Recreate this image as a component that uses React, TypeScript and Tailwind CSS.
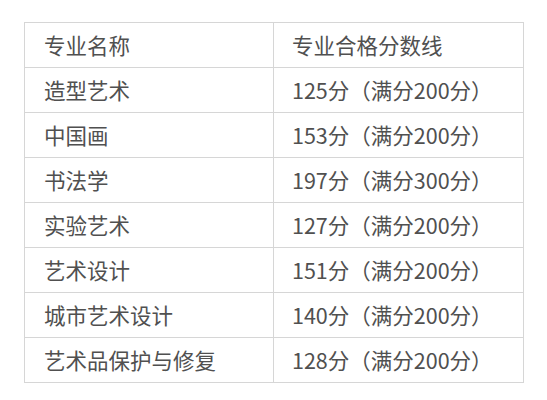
const rows = [
  ['专业名称', '专业合格分数线'],
  ['造型艺术', '125分（满分200分）'],
  ['中国画', '153分（满分200分）'],
  ['书法学', '197分（满分300分）'],
  ['实验艺术', '127分（满分200分）'],
  ['艺术设计', '151分（满分200分）'],
  ['城市艺术设计', '140分（满分200分）'],
  ['艺术品保护与修复', '128分（满分200分）'],
];

export default function App() {
  return (
    <div
      className="w-[547px] h-[400px] bg-white pt-[22px] pl-[24px]"
      style={{ fontFamily: '"Noto Sans CJK SC", "Noto Sans", sans-serif' }}
    >
      <table className="border-collapse w-[500px] text-[#505050] text-[21.5px]">
        <tbody>
          {rows.map(([name, score]) => (
            <tr key={name} className="h-[45px]">
              <td className="border border-[#d6d6d6] w-[249px] pl-[19px] leading-none">{name}</td>
              <td className="border border-[#d6d6d6] pl-[18px] leading-none">{score}</td>
            </tr>
          ))}
        </tbody>
      </table>
    </div>
  );
}
